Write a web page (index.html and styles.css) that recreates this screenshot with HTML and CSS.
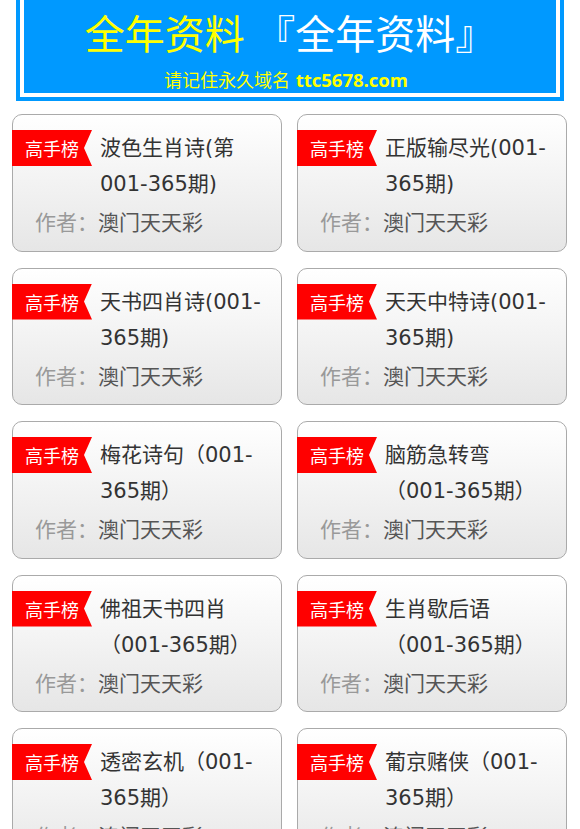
FILE: index.html
```html
<!DOCTYPE html>
<html lang="zh-CN">
<head>
  <meta charset="UTF-8">
  <meta name="viewport" content="width=device-width, initial-scale=1.0">
  <title>全年资料</title>
  <link rel="stylesheet" href="styles.css">
</head>
<body>
  <div class="top">
    <div class="top-inner">
      <h1 class="top-title"><span class="yellow">全年资料</span> 『全年资料』</h1>
      <p class="top-domain">请记住永久域名 <b>ttc5678.com</b></p>
    </div>
  </div>

  <div class="list">
    <div class="card">
      <div class="card-head">
        <span class="badge">高手榜</span>
        <span class="card-title">波色生肖诗(第001-365期)</span>
      </div>
      <div class="card-author"><em>作者：</em>澳门天天彩</div>
    </div>
    <div class="card">
      <div class="card-head">
        <span class="badge">高手榜</span>
        <span class="card-title">正版输尽光(001-365期)</span>
      </div>
      <div class="card-author"><em>作者：</em>澳门天天彩</div>
    </div>
    <div class="card">
      <div class="card-head">
        <span class="badge">高手榜</span>
        <span class="card-title">天书四肖诗(001-365期)</span>
      </div>
      <div class="card-author"><em>作者：</em>澳门天天彩</div>
    </div>
    <div class="card">
      <div class="card-head">
        <span class="badge">高手榜</span>
        <span class="card-title">天天中特诗(001-365期)</span>
      </div>
      <div class="card-author"><em>作者：</em>澳门天天彩</div>
    </div>
    <div class="card">
      <div class="card-head">
        <span class="badge">高手榜</span>
        <span class="card-title">梅花诗句（001-365期）</span>
      </div>
      <div class="card-author"><em>作者：</em>澳门天天彩</div>
    </div>
    <div class="card">
      <div class="card-head">
        <span class="badge">高手榜</span>
        <span class="card-title">脑筋急转弯（001-365期）</span>
      </div>
      <div class="card-author"><em>作者：</em>澳门天天彩</div>
    </div>
    <div class="card">
      <div class="card-head">
        <span class="badge">高手榜</span>
        <span class="card-title">佛祖天书四肖（001-365期）</span>
      </div>
      <div class="card-author"><em>作者：</em>澳门天天彩</div>
    </div>
    <div class="card">
      <div class="card-head">
        <span class="badge">高手榜</span>
        <span class="card-title">生肖歇后语（001-365期）</span>
      </div>
      <div class="card-author"><em>作者：</em>澳门天天彩</div>
    </div>
    <div class="card">
      <div class="card-head">
        <span class="badge">高手榜</span>
        <span class="card-title">透密玄机（001-365期）</span>
      </div>
      <div class="card-author"><em>作者：</em>澳门天天彩</div>
    </div>
    <div class="card">
      <div class="card-head">
        <span class="badge">高手榜</span>
        <span class="card-title">葡京赌侠（001-365期）</span>
      </div>
      <div class="card-author"><em>作者：</em>澳门天天彩</div>
    </div>
  </div>
</body>
</html>
```

FILE: styles.css
```css
*, *::before, *::after {
  padding: 0;
  margin: 0;
  box-sizing: border-box;
}

body {
  font-family: "Open Sans", "Noto Sans CJK SC", sans-serif;
  background: #fff;
  color: #333;
}

.top {
  margin: 0 16px;
  background: #0099ff;
  padding: 0 4px 4px;
}

.top-inner {
  border: 4px solid #fff;
  border-top: 0;
  text-align: center;
  padding-top: 10px;
  height: 97px;
}

.top-title {
  font-size: 40px;
  font-weight: normal;
  line-height: 48px;
  color: #fff;
  white-space: nowrap;
}

.top-title .yellow {
  color: #ffff00;
}

.top-domain {
  margin-top: 9px;
  padding-right: 8px;
  font-size: 18px;
  line-height: 26px;
  color: #ffff00;
}

.top-domain b {
  font-weight: bold;
  font-size: 18.5px;
  margin-left: 1px;
}

.list {
  display: grid;
  grid-template-columns: 270px 270px;
  column-gap: 15px;
  row-gap: 16px;
  padding: 13px 13px 0 12px;
}

.card {
  border: 1px solid #aaa;
  border-radius: 10px;
  background: linear-gradient(to bottom, #fff, #e6e6e6);
  padding: 15px 0 9.5px;
  font-family: "DejaVu Sans", "Noto Sans CJK SC", sans-serif;
  font-size: 21px;
}

.card-head {
  display: flex;
  align-items: flex-start;
}

.badge {
  flex: none;
  width: 80px;
  height: 36px;
  margin-left: -1px;
  padding-left: 13px;
  background: #ff0000;
  color: #fff;
  font-family: "Noto Sans CJK SC", sans-serif;
  font-size: 18px;
  line-height: 36px;
  clip-path: polygon(0 0, 100% 0, calc(100% - 8px) 50%, 100% 100%, 0 100%);
}

.card-title {
  margin-left: 8px;
  width: 166px;
  line-height: 36px;
  color: #333;
}

.card-author {
  margin-top: 3px;
  padding-left: 22px;
  line-height: 36px;
  color: #555;
}

.card-author em {
  font-style: normal;
  color: #999;
}
```
